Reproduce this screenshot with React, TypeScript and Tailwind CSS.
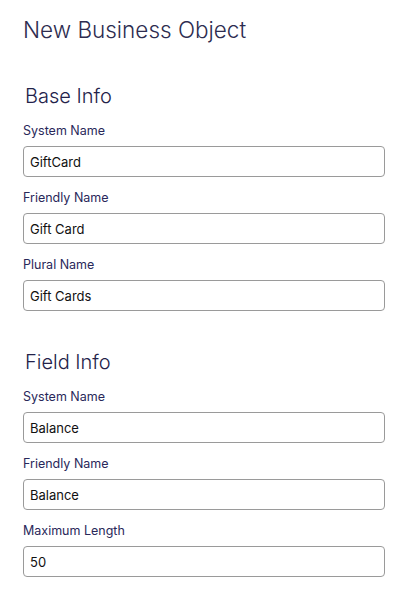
import React from 'react';

interface FieldProps {
  label: string;
  value: string;
}

const Field: React.FC<FieldProps> = ({ label, value }) => (
  <div className="flex flex-col">
    <label className="text-[12.5px] leading-[15px] text-[#29285a] mb-[8px]">{label}</label>
    <input
      readOnly
      value={value}
      className="h-[31px] w-full rounded-[4px] border border-[#9a9a9a] bg-white px-[6px] text-[13px] text-[#111] outline-none"
    />
  </div>
);

const Section: React.FC<{ title: string; fields: FieldProps[] }> = ({ title, fields }) => (
  <section className="flex flex-col">
    <h2 className="ml-[2px] text-[20px] font-light leading-[24px] text-[#23224a] mb-[15px]">{title}</h2>
    <div className="flex flex-col gap-[13px]">
      {fields.map((f) => (
        <Field key={f.label} {...f} />
      ))}
    </div>
  </section>
);

export default function App() {
  return (
    <div
      className="min-h-screen bg-white pl-[23px] pr-[14px] pt-[15px]"
      style={{ fontFamily: 'Inter, "Noto Sans", sans-serif' }}
    >
      <h1 className="text-[22.5px] font-light leading-[30px] text-[#2d2c4f] mb-[39px]">New Business Object</h1>
      <div className="flex flex-col gap-[39px]">
        <Section
          title="Base Info"
          fields={[
            { label: 'System Name', value: 'GiftCard' },
            { label: 'Friendly Name', value: 'Gift Card' },
            { label: 'Plural Name', value: 'Gift Cards' },
          ]}
        />
        <Section
          title="Field Info"
          fields={[
            { label: 'System Name', value: 'Balance' },
            { label: 'Friendly Name', value: 'Balance' },
            { label: 'Maximum Length', value: '50' },
          ]}
        />
      </div>
    </div>
  );
}
